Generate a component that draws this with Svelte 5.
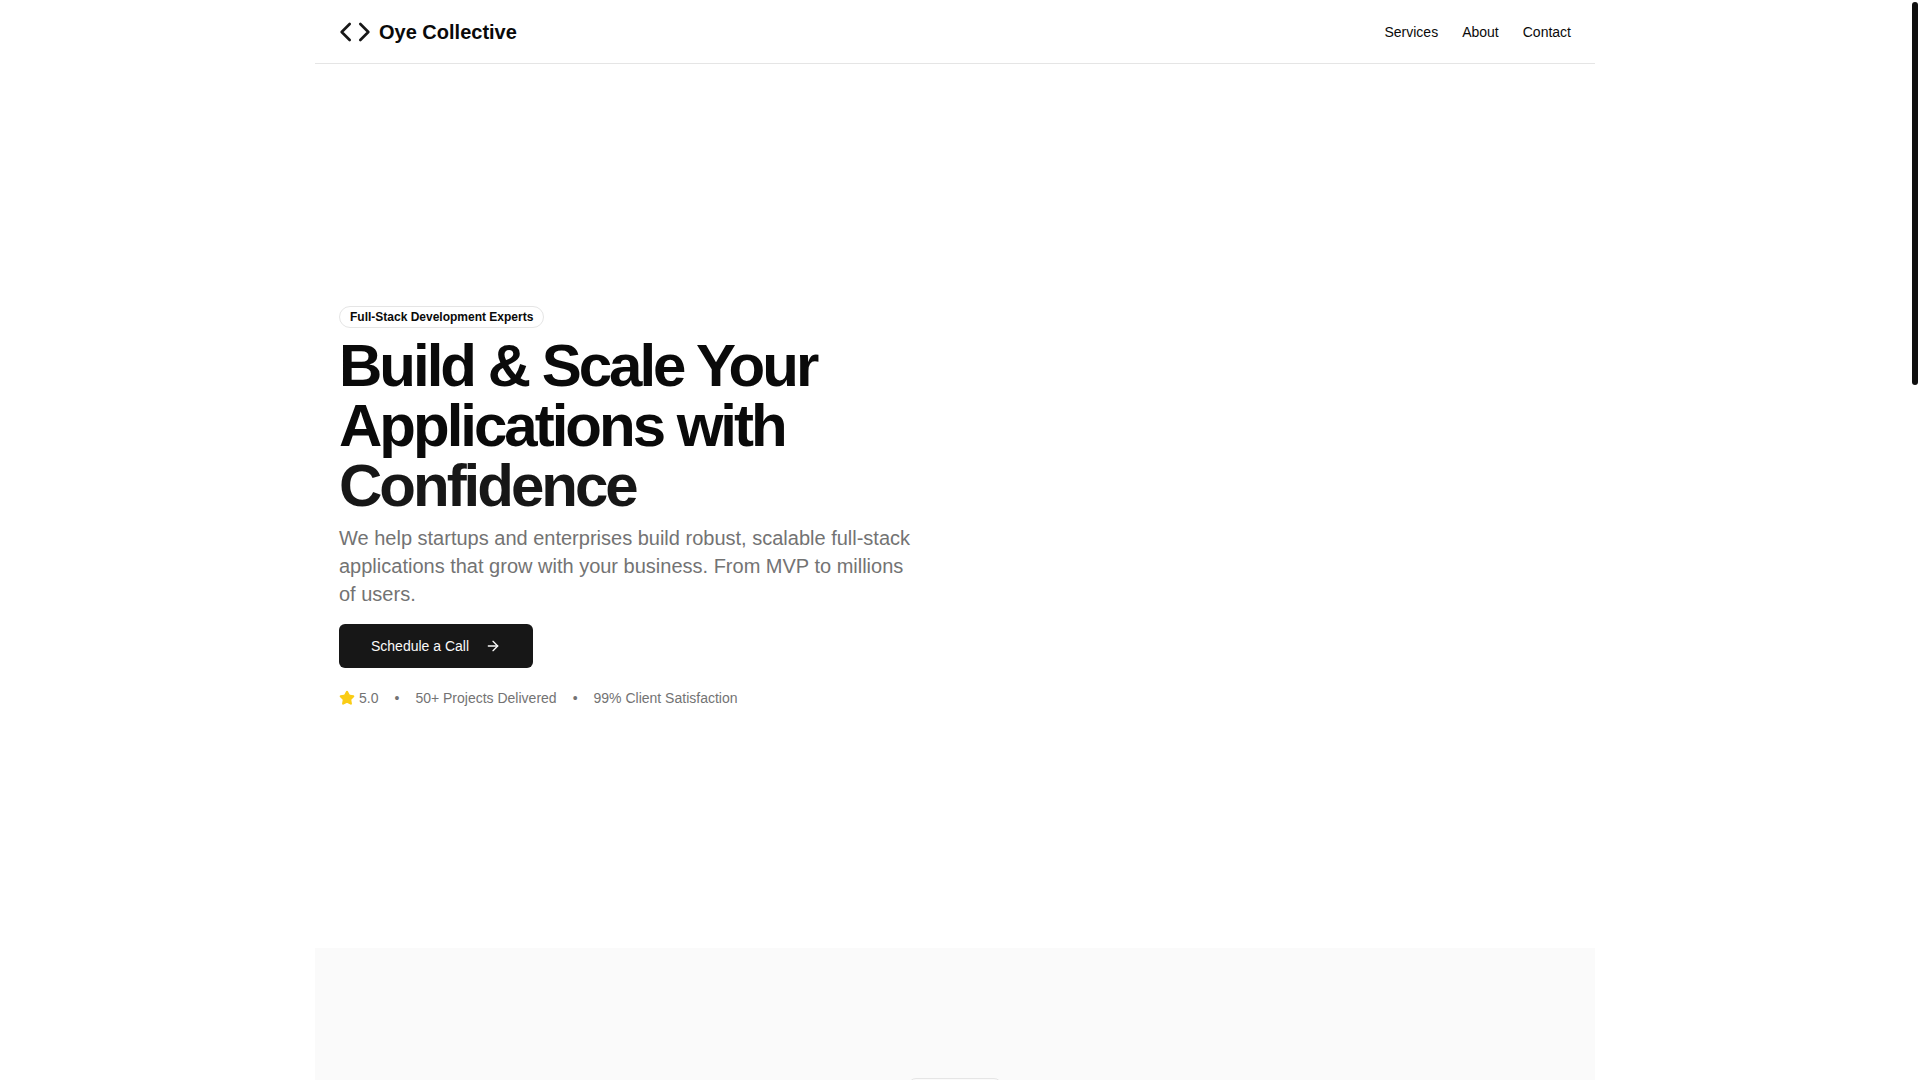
<script lang="ts">
	const links = [
		{ label: "Services", href: "#services" },
		{ label: "About", href: "#about" },
		{ label: "Contact", href: "#contact" }
	];

	const stats = ["50+ Projects Delivered", "99% Client Satisfaction"];
</script>

<div class="page">
	<div class="container">
		<header>
			<a class="brand" href="#top">
				<svg width="32" height="32" viewBox="0 0 24 24" fill="none" stroke="currentColor" stroke-width="2" stroke-linecap="round" stroke-linejoin="round" aria-hidden="true">
					<polyline points="16 18 22 12 16 6" />
					<polyline points="8 6 2 12 8 18" />
				</svg>
				<span>Oye Collective</span>
			</a>
			<nav>
				{#each links as link}
					<a href={link.href}>{link.label}</a>
				{/each}
			</nav>
		</header>

		<main>
			<section class="hero">
				<div class="hero-content">
					<div class="badge">Full-Stack Development Experts</div>
					<h1>Build &amp; Scale Your Applications with <span>Confidence</span></h1>
					<p>We help startups and enterprises build robust, scalable full-stack applications that grow with your business. From MVP to millions of users.</p>
					<button type="button">
						Schedule a Call
						<svg width="16" height="16" viewBox="0 0 24 24" fill="none" stroke="currentColor" stroke-width="2" stroke-linecap="round" stroke-linejoin="round" aria-hidden="true">
							<path d="M5 12h14" />
							<path d="m12 5 7 7-7 7" />
						</svg>
					</button>
					<div class="stats">
						<div class="rating">
							<svg width="16" height="16" viewBox="0 0 24 24" fill="currentColor" stroke="currentColor" stroke-width="2" stroke-linecap="round" stroke-linejoin="round" aria-hidden="true">
								<path
									d="M11.525 2.295a.53.53 0 0 1 .95 0l2.31 4.679a2.123 2.123 0 0 0 1.595 1.16l5.166.756a.53.53 0 0 1 .294.904l-3.736 3.638a2.123 2.123 0 0 0-.611 1.878l.882 5.14a.53.53 0 0 1-.771.56l-4.618-2.428a2.122 2.122 0 0 0-1.973 0L6.396 21.01a.53.53 0 0 1-.77-.56l.881-5.139a2.122 2.122 0 0 0-.611-1.879L2.16 9.795a.53.53 0 0 1 .294-.906l5.165-.755a2.122 2.122 0 0 0 1.597-1.16z"
								/>
							</svg>
							<span>5.0</span>
						</div>
						{#each stats as stat}
							<span>•</span>
							<span>{stat}</span>
						{/each}
					</div>
				</div>
			</section>

			<section class="services" id="services">
				<div class="services-tag"></div>
			</section>
		</main>
	</div>

	<div class="scrollbar" aria-hidden="true">
		<div class="thumb"></div>
	</div>
</div>

<style>
	:global(body) {
		margin: 0;
		background: #fff;
	}
	.page {
		height: 100vh;
		overflow: hidden;
		box-sizing: border-box;
		padding-right: 10px;
		font-family: "Liberation Sans", Arial, sans-serif;
		color: #0a0a0a;
	}
	.container {
		max-width: 1280px;
		margin: 0 auto;
	}
	header {
		display: flex;
		align-items: center;
		justify-content: space-between;
		height: 63px;
		padding: 0 24px;
		border-bottom: 1px solid #e5e5e5;
	}
	a {
		color: inherit;
		text-decoration: none;
	}
	.brand {
		display: flex;
		align-items: center;
		gap: 8px;
		font-size: 20px;
		line-height: 28px;
		font-weight: bold;
	}
	.brand svg {
		color: #171717;
	}
	nav {
		display: flex;
		gap: 24px;
		font-size: 14px;
		line-height: 20px;
	}
	.hero {
		display: grid;
		grid-template-columns: 1fr 1fr;
		gap: 64px;
		padding: 242px 24px 240px;
	}
	.hero-content {
		display: flex;
		flex-direction: column;
		align-items: flex-start;
	}
	.badge {
		padding: 2px 10px;
		border: 1px solid #e5e5e5;
		border-radius: 11px;
		font-size: 12px;
		line-height: 16px;
		font-weight: bold;
	}
	h1 {
		margin: 8px 0;
		font-size: 60px;
		line-height: 60px;
		font-weight: bold;
		letter-spacing: -0.05em;
	}
	h1 span {
		color: #171717;
	}
	p {
		margin: 0;
		max-width: 600px;
		font-size: 20px;
		line-height: 28px;
		color: #737373;
	}
	button {
		display: flex;
		align-items: center;
		gap: 16px;
		height: 44px;
		margin: 16px 0 20px;
		padding: 0 32px;
		border: none;
		border-radius: 6px;
		background: #171717;
		color: #fafafa;
		font-family: inherit;
		font-size: 14px;
		line-height: 20px;
	}
	.stats {
		display: flex;
		align-items: center;
		gap: 16px;
		font-size: 14px;
		line-height: 20px;
		color: #737373;
	}
	.rating {
		display: flex;
		align-items: center;
		gap: 4px;
	}
	.rating svg {
		color: #facc15;
	}
	.services {
		min-height: 400px;
		box-sizing: border-box;
		padding: 130px 24px;
		background: #fafafa;
	}
	.services-tag {
		width: 92px;
		height: 28px;
		margin: 0 auto;
		border: 1px solid #e5e5e5;
		border-radius: 8px;
	}
	.scrollbar {
		position: fixed;
		top: 0;
		right: 0;
		bottom: 0;
		width: 10px;
		box-sizing: border-box;
		padding: 2px;
	}
	.thumb {
		height: 383px;
		border-radius: 3px;
		background: #0f0f0f;
	}
</style>
